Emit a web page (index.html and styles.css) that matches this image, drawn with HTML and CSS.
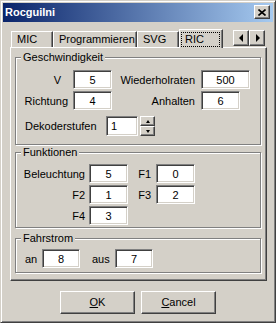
FILE: index.html
```html
<!DOCTYPE html>
<html lang="de">
<head>
  <meta charset="UTF-8">
  <title>RocguiIni</title>
  <link rel="stylesheet" href="styles.css">
</head>
<body>
  <div class="window">
    <!-- Titelleiste -->
    <div class="titlebar">
      <span class="title">RocguiIni</span>
      <span class="close">
        <svg width="8" height="7" viewBox="0 0 8 7"><path d="M0.5 0.5 L7.5 6.5 M7.5 0.5 L0.5 6.5" stroke="#000" stroke-width="1.6" fill="none"/></svg>
      </span>
    </div>

    <!-- Register -->
    <div class="notebook">
      <div class="tabstrip">
        <div class="tab tab-mic">MIC</div>
        <div class="tab tab-prog">Programmieren</div>
        <div class="tab tab-svg">SVG</div>
        <div class="tab tab-active"><span class="focus">RIC</span></div>
        <div class="scroller">
          <span class="arrow-btn"><i class="tri tri-left"></i></span>
          <span class="arrow-btn"><i class="tri tri-right"></i></span>
        </div>
      </div>

      <div class="page">
        <div class="group group-speed">
          <div class="legend">Geschwindigkeit</div>
          <div class="rows speed-grid">
            <span class="lbl lbl-v">V</span>
            <input class="edit" value="5">
            <span class="lbl lbl-r2">Wiederholraten</span>
            <input class="edit edit-wide" value="500">
            <span class="lbl">Richtung</span>
            <input class="edit" value="4">
            <span class="lbl lbl-r2">Anhalten</span>
            <input class="edit" value="6">
          </div>
          <div class="rows decoder">
            <span class="lbl-decoder">Dekoderstufen</span>
            <input class="edit edit-spin" value="1">
            <span class="spinner">
              <span class="spin-btn"><i class="tri tri-up"></i></span>
              <span class="spin-btn"><i class="tri tri-down"></i></span>
            </span>
          </div>
        </div>

        <div class="group group-func">
          <div class="legend">Funktionen</div>
          <div class="rows func-grid">
            <span class="lbl">Beleuchtung</span>
            <input class="edit" value="5">
            <span class="lbl lbl-f">F1</span>
            <input class="edit" value="0">
            <span class="lbl">F2</span>
            <input class="edit" value="1">
            <span class="lbl lbl-f">F3</span>
            <input class="edit" value="2">
            <span class="lbl">F4</span>
            <input class="edit" value="3">
          </div>
        </div>

        <div class="group group-power">
          <div class="legend">Fahrstrom</div>
          <div class="rows power">
            <span class="lbl-an">an</span>
            <input class="edit edit-small" value="8">
            <span class="lbl-aus">aus</span>
            <input class="edit edit-small" value="7">
          </div>
        </div>
      </div>
    </div>

    <!-- Knöpfe -->
    <div class="buttons">
      <button class="btn"><u>O</u>K</button>
      <button class="btn"><u>C</u>ancel</button>
    </div>
  </div>
</body>
</html>
```

FILE: styles.css
```css
* {
  box-sizing: border-box;
}

html, body {
  margin: 0;
}

body {
  font: 11px "Liberation Sans", Arial, sans-serif;
  color: #000;
  background: #d4d0c8;
}

.window {
  width: 276px;
  height: 323px;
  background: #d4d0c8;
  border: 1px solid;
  border-color: #d4d0c8 #404040 #404040 #d4d0c8;
  box-shadow: inset 1px 1px #fff, inset -1px -1px #808080;
  padding: 2px;
}

/* Titelleiste */
.titlebar {
  height: 19px;
  display: flex;
  align-items: center;
  justify-content: space-between;
  padding: 0 3px 1px 2px;
  background: linear-gradient(to right, #0a246a, #a6caf0);
  color: #fff;
  font-weight: bold;
}

.close {
  width: 16px;
  height: 14px;
  display: flex;
  align-items: center;
  justify-content: center;
  background: #d4d0c8;
  border: 1px solid;
  border-color: #fff #404040 #404040 #fff;
  box-shadow: inset -1px -1px #808080;
}

.close svg {
  display: block;
}

/* Register */
.notebook {
  margin: 7px 6px 0 7px;
}

.tabstrip {
  display: flex;
  align-items: flex-end;
  height: 18px;
  padding-left: 1px;
}

.tab {
  height: 16px;
  padding-left: 5px;
  line-height: 15px;
  white-space: nowrap;
  border-left: 1px solid #fff;
  border-top: 1px solid #fff;
  border-right: 1px solid #404040;
  box-shadow: inset -1px 0 #808080;
}

.tab-mic { width: 42px; }
.tab-prog { width: 84px; }
.tab-svg { width: 42px; }

.tab-active {
  position: relative;
  z-index: 1;
  width: 44px;
  height: 19px;
  margin-bottom: -1px;
  padding: 2px 0 0 1px;
  background: #d4d0c8;
}

.focus {
  display: block;
  width: 39px;
  height: 15px;
  padding-left: 3px;
  line-height: 13px;
  border: 1px dotted #000;
}

.scroller {
  display: flex;
  align-self: flex-start;
  margin: 1px 2px 0 auto;
}

.arrow-btn {
  width: 16px;
  height: 16px;
  display: flex;
  align-items: center;
  justify-content: center;
  background: #d4d0c8;
  border: 1px solid;
  border-color: #fff #404040 #404040 #fff;
  box-shadow: inset -1px -1px #808080;
}

.tri {
  display: block;
  width: 0;
  height: 0;
  border-style: solid;
  border-color: transparent;
}

.tri-left {
  border-width: 4px 4px 4px 0;
  border-right-color: #000;
  margin-right: 1px;
}

.tri-right {
  border-width: 4px 0 4px 4px;
  border-left-color: #000;
  margin-left: 1px;
}

.tri-up {
  border-width: 0 2.5px 3px 2.5px;
  border-bottom-color: #000;
}

.tri-down {
  border-width: 3px 2.5px 0 2.5px;
  border-top-color: #000;
}

.page {
  height: 234px;
  padding: 9px 5px 0 4px;
  border: 1px solid;
  border-color: #fff #404040 #404040 #fff;
  box-shadow: inset -1px -1px #808080;
}

/* Gruppen */
.group {
  border: 1px solid #808080;
  box-shadow: inset 1px 1px #fff, 1px 1px #fff;
}

.legend {
  width: fit-content;
  margin: -7px 0 6px 5px;
  padding: 0 2px;
  line-height: 13px;
  background: #d4d0c8;
}

.rows {
  margin-left: 9px;
}

.group-speed {
  padding-bottom: 8px;
}

.group-func {
  margin-top: 7px;
  padding-bottom: 2px;
}

.group-func .legend {
  margin-bottom: 5px;
}

.group-power {
  margin-top: 10px;
  padding-bottom: 4px;
}

.group-power .legend {
  margin-bottom: 4px;
}

.lbl {
  display: flex;
  align-items: center;
  justify-content: flex-end;
  padding-right: 5px;
  white-space: nowrap;
}

.speed-grid {
  display: grid;
  grid-template-columns: 48px 39px 89px 49px;
  grid-auto-rows: 19px;
  row-gap: 2px;
}

.lbl-v {
  padding-right: 12px;
}

.lbl-r2 {
  padding-right: 6px;
}

.func-grid {
  display: grid;
  grid-template-columns: 64px 39px 28px 39px;
  grid-auto-rows: 19px;
  row-gap: 2px;
}

.func-grid .lbl {
  padding-right: 4px;
}

.func-grid .lbl-f {
  padding-right: 5px;
}

.edit {
  width: 39px;
  height: 19px;
  margin: 0;
  padding: 0;
  font: inherit;
  color: #000;
  text-align: center;
  background: #fff;
  border: 1px solid;
  border-color: #808080 #fff #fff #808080;
  box-shadow: inset 1px 1px #404040, inset -1px -1px #d4d0c8;
  outline: none;
}

.edit-wide {
  width: 49px;
}

.decoder {
  display: flex;
  align-items: center;
  height: 20px;
  margin-top: 6px;
}

.lbl-decoder {
  width: 81px;
}

.edit-spin {
  width: 32px;
  height: 20px;
  padding-left: 4px;
  text-align: left;
}

.spinner {
  display: flex;
  flex-direction: column;
  width: 15px;
  height: 20px;
  margin-left: 2px;
}

.spin-btn {
  height: 10px;
  display: flex;
  align-items: center;
  justify-content: center;
  background: #d4d0c8;
  border: 1px solid;
  border-color: #fff #404040 #404040 #fff;
  box-shadow: inset -1px -1px #808080;
}

.power {
  display: flex;
  align-items: center;
  height: 19px;
}

.lbl-an {
  width: 17px;
}

.lbl-aus {
  width: 23px;
  margin-left: 12px;
}

.edit-small {
  width: 38px;
}

/* Knöpfe */
.buttons {
  display: flex;
  justify-content: center;
  gap: 6px;
  margin-top: 10px;
}

.btn {
  width: 75px;
  height: 23px;
  padding: 0 0 1px;
  font: inherit;
  color: #000;
  background: #d4d0c8;
  border: 1px solid;
  border-color: #fff #404040 #404040 #fff;
  box-shadow: inset -1px -1px #808080;
}
```
